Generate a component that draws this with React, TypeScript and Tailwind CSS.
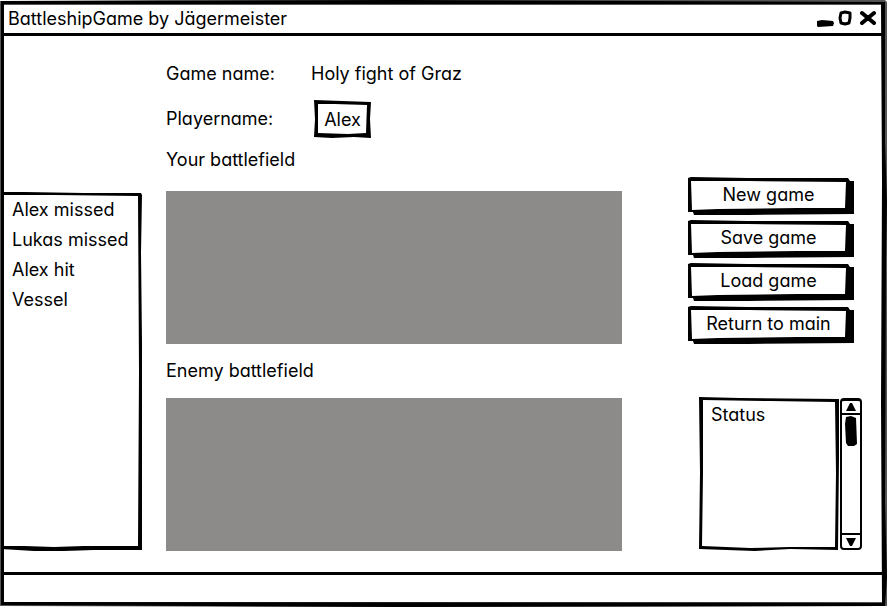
import type { ReactNode } from "react";

type FrameProps = { viewBox: string; d: string; edge?: string };

/* Hand-drawn outline stretched over its parent box, with an optional grey outer edge. */
function Frame({ viewBox, d, edge }: FrameProps) {
  return (
    <svg
      aria-hidden="true"
      viewBox={viewBox}
      preserveAspectRatio="none"
      className="pointer-events-none absolute inset-0 h-full w-full overflow-visible"
    >
      {edge && <path d={edge} fillRule="evenodd" fill="#555" />}
      <path d={d} fillRule="evenodd" fill="#000" />
    </svg>
  );
}

function GameButton({ children }: { children: ReactNode }) {
  return (
    <button type="button" className="relative h-9 w-[165px] pr-1 pb-[2px] text-center leading-6">
      <Frame
        viewBox="0 0 165 36"
        d="M0 0 L3 -1 L60 0 L160 0 L162 3 L166 3 L166 36 L60 37 L6 37 L5 34 L0 34 Z M3 3 L60 3 L158 4 L157 30 L110 30 L30 31 L4 32 Z"
      />
      {children}
    </button>
  );
}

function ListPanel({ items }: { items: string[] }) {
  return (
    <aside className="relative mt-[156px] mb-[21px] w-[138px] shrink-0 pt-[3px] pl-2">
      <Frame
        viewBox="0 0 138 359"
        d="M-1 0 L20 0 L80 1 L137 1 L138 3 L137 60 L138 150 L138 250 L138 358 L90 358 L60 359 L30 359 L-3 357 L-3 355 L-1 355 Z M-1 3 L50 3 L134 4 L135 180 L134 354 L80 354 L50 355 L20 354 L-1 354 Z"
      />
      <ul>
        {items.map((item) => (
          <li key={item} className="leading-[30px] whitespace-nowrap">
            {item}
          </li>
        ))}
      </ul>
    </aside>
  );
}

const log = ["Alex missed", "Lukas missed", "Alex hit", "Vessel"];
const actions = ["New game", "Save game", "Load game", "Return to main"];

export default function App() {
  return (
    <div className="min-h-screen bg-white pt-[2px] pr-[2px] pb-[2px] pl-px font-['Inter','Open_Sans',sans-serif] text-lg text-black [font-feature-settings:'cv11']">
      <div className="relative flex min-h-[604px] flex-col p-[3px]">
        <Frame
          viewBox="0 0 884 604"
          edge="M-1 -1 L160 -2 L884 -2 L886 0 L886 604 L400 605 L-1 604 Z M3 3 L881 3 L881 600 L3 600 Z"
          d="M0 -1 L160 -1 L400 -2 L884 0 L884 140 L886 200 L885 260 L884 500 L886 575 L884 604 L400 605 L0 603 Z M3 2 L400 2 L880 2 L881 180 L880 400 L881 601 L3 600 Z"
        />
        <header className="flex h-[31px] items-center justify-between border-b-[3px] border-black pr-[6px] pl-1">
          <h1 className="leading-6">BattleshipGame by Jägermeister</h1>
          <div className="flex gap-1">
            <button type="button" aria-label="Minimize" className="h-[18px] w-[18px]">
              <svg viewBox="0 0 18 18" className="h-[18px] w-[18px]">
                <path d="M1 11 L6 10 L17 11 L18 13 L17 16 L2 17 L1 16 Z" />
              </svg>
            </button>
            <button type="button" aria-label="Maximize" className="h-[18px] w-[14px]">
              <svg viewBox="0 0 14 18" className="h-[18px] w-[14px]">
                <path
                  d="M3 3 L7 2 L12 3 L12 8 L11 13 L7 14 L3 13 L2 8 Z"
                  fill="none"
                  stroke="#000"
                  strokeWidth="3"
                  strokeLinejoin="round"
                />
              </svg>
            </button>
            <button type="button" aria-label="Close" className="ml-1 h-[18px] w-4">
              <svg viewBox="0 0 16 18" className="h-[18px] w-4">
                <path
                  d="M2 3 L8 8 L14 13 M14 3 L8 8 L2 13"
                  fill="none"
                  stroke="#000"
                  strokeWidth="4"
                  strokeLinecap="round"
                  strokeLinejoin="round"
                />
                <circle cx="8" cy="8" r="3" />
              </svg>
            </button>
          </div>
        </header>

        <main className="flex flex-1">
          <ListPanel items={log} />

          <section className="mr-[66px] ml-6 flex-1 pt-[26px] pb-[21px]">
            <div className="flex leading-6">
              <span className="w-[145px]">Game name:</span>
              <span>Holy fight of Graz</span>
            </div>
            <div className="mt-[15px] flex items-center leading-6">
              <label htmlFor="player" className="w-[148px]">
                Playername:
              </label>
              <div className="relative h-9 w-[57px]">
                <Frame
                  viewBox="0 0 57 36"
                  d="M0 -1 L28 0 L57 1 L56 18 L57 37 L40 36 L18 37 L0 36 L1 18 Z M4 3 L20 3 L53 4 L52 32 L34 33 L4 32 Z"
                />
                <input
                  id="player"
                  type="text"
                  defaultValue="Alex"
                  className="block h-9 w-full bg-transparent px-1 text-center outline-none"
                />
              </div>
            </div>
            <h2 className="mt-[11px] leading-6">Your battlefield</h2>
            <div className="mt-[19px] h-[153px] bg-[#8c8b89]" />
            <h2 className="mt-[15px] leading-6">Enemy battlefield</h2>
            <div className="mt-[15px] h-[153px] bg-[#8c8b89]" />
          </section>

          <section className="mr-[19px] w-[175px] shrink-0 pt-[142px]">
            <div className="flex flex-col gap-[7px]">
              {actions.map((action) => (
                <GameButton key={action}>{action}</GameButton>
              ))}
            </div>
            <div className="mt-[55px] flex gap-px pl-3">
              <div className="relative h-[152px] w-[139px]">
                <Frame
                  viewBox="0 0 139 152"
                  d="M-1 -1 L40 0 L139 1 L139 60 L138 152 L90 151 L55 153 L-1 151 L0 75 Z M3 2 L70 3 L135 4 L136 75 L135 149 L90 149 L50 150 L2 148 L3 75 Z"
                />
                <textarea
                  readOnly
                  aria-label="Status"
                  defaultValue="Status"
                  className="block h-[152px] w-full resize-none overflow-hidden bg-transparent px-[11px] pt-[5px] leading-6 outline-none"
                />
              </div>
              <div className="flex h-[152px] w-[22px] flex-col rounded-sm border-2 border-t-[3px] border-black">
                <button
                  type="button"
                  aria-label="Scroll up"
                  className="flex h-[14px] items-center justify-center border-b-2 border-black"
                >
                  <svg viewBox="0 0 12 8" className="h-2 w-3">
                    <path d="M5 0 L7 0 L11 8 L1 8 Z" />
                  </svg>
                </button>
                <div className="flex flex-1 justify-center pt-px">
                  <svg viewBox="0 0 12 30" className="h-[30px] w-3">
                    <path d="M1 1 L6 0 L11 2 L12 28 L9 30 L3 30 L1 27 L0 8 Z" />
                  </svg>
                </div>
                <button
                  type="button"
                  aria-label="Scroll down"
                  className="flex h-[15px] items-center justify-center border-t-2 border-black"
                >
                  <svg viewBox="0 0 12 8" className="h-2 w-3">
                    <path d="M1 0 L11 0 L7 8 L5 8 Z" />
                  </svg>
                </button>
              </div>
            </div>
          </section>
        </main>

        <footer className="h-[31px] border-t-[3px] border-black" />
      </div>
    </div>
  );
}
